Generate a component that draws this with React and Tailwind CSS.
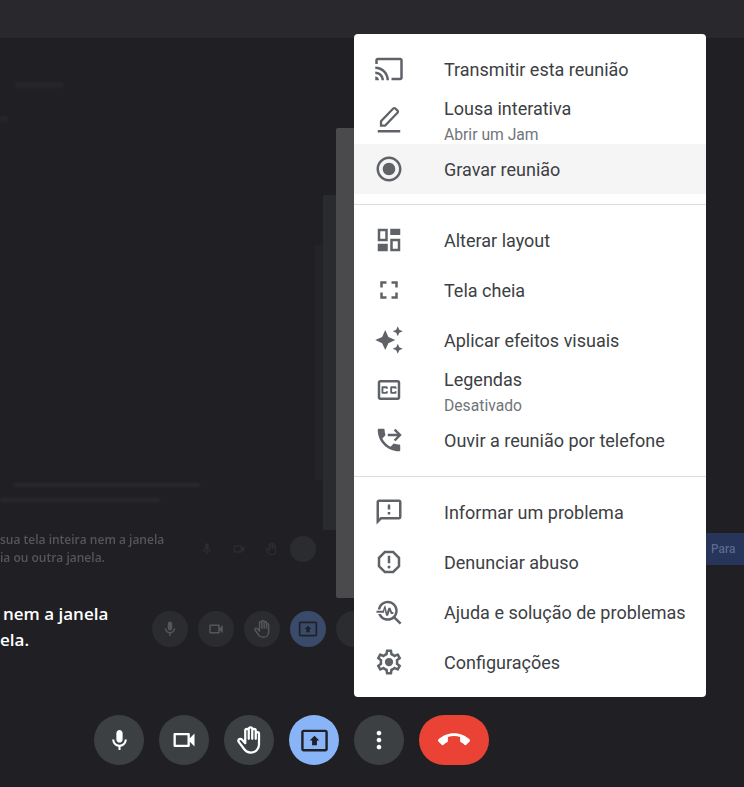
function Icon({ d, size = 30, className = "", evenodd = false }) {
  return (
    <svg viewBox="0 0 24 24" width={size} height={size} className={className} fill="currentColor" fillRule={evenodd ? "evenodd" : "nonzero"}>
      <path d={d} />
    </svg>
  );
}

const icons = {
  cast: "M21 3H3c-1.1 0-2 .9-2 2v3h2V5h18v14h-7v2h7c1.1 0 2-.9 2-2V5c0-1.1-.9-2-2-2zM1 18v3h3c0-1.66-1.34-3-3-3zm0-4v2c2.76 0 5 2.24 5 5h2c0-3.87-3.13-7-7-7zm0-4v2c4.97 0 9 4.03 9 9h2c0-6.08-4.93-11-11-11z",
  record: "M12 7c-2.76 0-5 2.24-5 5s2.24 5 5 5 5-2.24 5-5-2.24-5-5-5zm0-5C6.48 2 2 6.48 2 12s4.48 10 10 10 10-4.48 10-10S17.52 2 12 2zm0 18c-4.42 0-8-3.58-8-8s3.58-8 8-8 8 3.58 8 8-3.58 8-8 8z",
  layout: "M3 3h8v10H3zm2 2v6h4V5zM13 3h8v5h-8zM3 15h8v6H3zM13 11h8v10h-8zm2 2v6h4v-6z",
  fullscreen: "M7 14H5v5h5v-2H7v-3zm-2-4h2V7h3V5H5v5zm12 7h-3v2h5v-5h-2v3zM14 5v2h3v3h2V5h-5z",
  sparkles: "M19 9l1.25-2.75L23 5l-2.75-1.25L19 1l-1.25 2.75L15 5l2.75 1.25L19 9zm-7.5.5L9 4 6.5 9.5 1 12l5.5 2.5L9 20l2.5-5.5L17 12l-5.5-2.5zM19 15l-1.25 2.75L15 19l2.75 1.25L19 23l1.25-2.75L23 19l-2.75-1.25L19 15z",
  cc: "M19 4H5c-1.11 0-2 .9-2 2v12c0 1.1.89 2 2 2h14c1.1 0 2-.9 2-2V6c0-1.1-.9-2-2-2zm0 14H5V6h14v12zM7 15h3c.55 0 1-.45 1-1v-1H9.5v.5h-2v-3h2v.5H11v-1c0-.55-.45-1-1-1H7c-.55 0-1 .45-1 1v4c0 .55.45 1 1 1zm7 0h3c.55 0 1-.45 1-1v-1h-1.5v.5h-2v-3h2v.5H18v-1c0-.55-.45-1-1-1h-3c-.55 0-1 .45-1 1v4c0 .55.45 1 1 1z",
  phone: "M11 7h7.5L15.8 4.3 17.2 3l5 5-5 5-1.4-1.3L18.5 9H11zM20 15.5c-1.25 0-2.45-.2-3.57-.57-.35-.11-.74-.03-1.02.24l-2.2 2.2c-2.83-1.44-5.15-3.75-6.59-6.59l2.2-2.21c.28-.26.36-.65.25-1C8.7 6.45 8.5 5.25 8.5 4c0-.55-.45-1-1-1H4c-.55 0-1 .45-1 1 0 9.39 7.61 17 17 17 .55 0 1-.45 1-1v-3.5c0-.55-.45-1-1-1z",
  feedback: "M20 2H4c-1.1 0-1.99.9-1.99 2L2 22l4-4h14c1.1 0 2-.9 2-2V4c0-1.1-.9-2-2-2zm0 14H5.17L4 17.17V4h16v12zm-9-4h2v2h-2zm0-6h2v4h-2z",
  report: "M15.73 3H8.27L3 8.27v7.46L8.27 21h7.46L21 15.73V8.27L15.73 3zM19 14.9L14.9 19H9.1L5 14.9V9.1L9.1 5h5.8L19 9.1v5.8zM11 7h2v6h-2zM12 14.7a1.2 1.2 0 1 0 0 2.4 1.2 1.2 0 0 0 0-2.4z",
  troubleshoot: "M22 20.59l-4.69-4.69C18.37 14.55 19 12.85 19 11c0-4.42-3.58-8-8-8-4.08 0-7.44 3.05-7.93 7h2.02C5.57 7.17 8.03 5 11 5c3.31 0 6 2.69 6 6s-2.69 6-6 6c-2.42 0-4.5-1.44-5.45-3.5H3.398C4.48 16.69 7.48 19 11 19c1.85 0 3.55-.63 4.9-1.69L20.59 22 22 20.59zM8.43 9.69L9.65 15h1.64l1.26-3.78.9 2.28h2.05v-1.5h-1.02l-1.33-3.5h-1.57l-1.26 3.78-1.25-5.28H8.43l-1.38 4H2v1.5h6.1z",
  settings: "M19.43 12.98c.04-.32.07-.64.07-.98 0-.34-.03-.66-.07-.98l2.11-1.65c.19-.15.24-.42.12-.64l-2-3.46c-.09-.16-.26-.25-.44-.25-.06 0-.12.01-.17.03l-2.49 1c-.52-.4-1.08-.73-1.69-.98l-.38-2.65C14.46 2.18 14.25 2 14 2h-4c-.25 0-.46.18-.49.42l-.38 2.65c-.61.25-1.17.59-1.69.98l-2.49-1c-.06-.02-.12-.03-.18-.03-.17 0-.34.09-.43.25l-2 3.46c-.13.22-.07.49.12.64l2.11 1.65c-.04.32-.07.65-.07.98 0 .33.03.66.07.98l-2.11 1.65c-.19.15-.24.42-.12.64l2 3.46c.09.16.26.25.44.25.06 0 .12-.01.17-.03l2.49-1c.52.4 1.08.73 1.69.98l.38 2.65c.03.24.24.42.49.42h4c.25 0 .46-.18.49-.42l.38-2.65c.61-.25 1.17-.59 1.69-.98l2.49 1c.06.02.12.03.18.03.17 0 .34-.09.43-.25l2-3.46c.12-.22.07-.49-.12-.64l-2.11-1.65zm-1.98-1.71c.04.31.05.52.05.73 0 .21-.02.43-.05.73l-.14 1.13.89.7 1.08.84-.7 1.21-1.27-.51-1.04-.42-.9.68c-.43.32-.84.56-1.25.73l-1.06.43-.16 1.13-.2 1.35h-1.4l-.19-1.35-.16-1.13-1.06-.43c-.43-.18-.83-.41-1.23-.71l-.91-.7-1.06.43-1.27.51-.7-1.21 1.08-.84.89-.7-.14-1.13c-.03-.31-.05-.54-.05-.74s.02-.43.05-.73l.14-1.13-.89-.7-1.08-.84.7-1.21 1.27.51 1.04.42.9-.68c.43-.32.84-.56 1.25-.73l1.06-.43.16-1.13.2-1.35h1.39l.19 1.35.16 1.13 1.06.43c.43.18.83.41 1.23.71l.91.7 1.06-.43 1.27-.51.7 1.21-1.07.85-.89.7.14 1.13zM12 8.7a3.3 3.3 0 1 0 0 6.6 3.3 3.3 0 0 0 0-6.6z",
  mic: "M12 14c1.66 0 3-1.34 3-3V5c0-1.66-1.34-3-3-3S9 3.34 9 5v6c0 1.66 1.34 3 3 3zM17 11c0 2.76-2.24 5-5 5s-5-2.24-5-5H5c0 3.53 2.61 6.43 6 6.92V21h2v-3.08c3.39-.49 6-3.39 6-6.92h-2z",
  video: "M15 8v8H5V8h10m1-2H4c-.55 0-1 .45-1 1v10c0 .55.45 1 1 1h12c.55 0 1-.45 1-1v-3.5l4 4v-11l-4 4V7c0-.55-.45-1-1-1z",
  present: "M21 3.01H3c-1.1 0-2 .9-2 2V19c0 1.1.9 2 2 2h18c1.1 0 2-.9 2-2V5.01c0-1.1-.9-2-2-2zm0 16.02H3V4.99h18v14.04zM10 12H8l4-4 4 4h-2v4h-4v-4z",
  more: "M12 8c1.1 0 2-.9 2-2s-.9-2-2-2-2 .9-2 2 .9 2 2 2zm0 2c-1.1 0-2 .9-2 2s.9 2 2 2 2-.9 2-2-.9-2-2-2zm0 6c-1.1 0-2 .9-2 2s.9 2 2 2 2-.9 2-2-.9-2-2-2z",
  hangup: "M12 9c-1.6 0-3.15.25-4.6.72v3.1c0 .39-.23.74-.56.9-.98.49-1.87 1.12-2.66 1.85-.18.18-.43.28-.7.28-.28 0-.53-.11-.71-.29L.29 13.08c-.18-.17-.29-.42-.29-.7 0-.28.11-.53.29-.71C3.34 8.78 7.46 7 12 7s8.66 1.78 11.71 4.67c.18.18.29.43.29.71 0 .28-.11.53-.29.71l-2.48 2.48c-.18.18-.43.29-.71.29-.27 0-.52-.11-.7-.28-.79-.74-1.69-1.36-2.67-1.85-.33-.16-.56-.5-.56-.9v-3.1C15.15 9.25 13.6 9 12 9z",
};

function PencilIcon() {
  return (
    <svg viewBox="0 0 24 24" width="30" height="30" fill="none" stroke="currentColor" strokeWidth="1.8">
      <path d="M5.6 17.2v-3.4L15.4 3.6a1.2 1.2 0 0 1 1.7 0l1.7 1.7a1.2 1.2 0 0 1 0 1.7L8.9 17.2z" />
      <path d="M3 21.8h18" strokeWidth="2" />
    </svg>
  );
}

function HandIcon({ size = 30 }) {
  return (
    <svg viewBox="0 0 24 24" width={size} height={size} fill="none" stroke="currentColor" strokeWidth="1.8" strokeLinejoin="round" strokeLinecap="round">
      <path d="M9 12V4.5a1.4 1.4 0 0 1 2.8 0V11M11.8 11V3.2a1.4 1.4 0 0 1 2.8 0V11M14.6 11V4.5a1.4 1.4 0 0 1 2.8 0V11M17.4 11V7a1.3 1.3 0 0 1 2.6 0v8.5c0 3.8-2.8 6.5-6.5 6.5-2.6 0-4.2-1-5.6-3l-4.1-5.5c-.6-.8-.3-1.8.5-2.2.8-.4 1.6-.2 2.2.5L9 14.5V12" />
    </svg>
  );
}

function MenuRow({ icon, label, sub, active }) {
  return (
    <div className={`flex h-[50px] items-center gap-10 px-5 ${active ? "bg-[#f5f5f5]" : ""}`}>
      <div className="flex w-[30px] shrink-0 justify-center text-[#5f6368]">
        {icon === "pencil" ? <PencilIcon /> : <Icon d={icons[icon]} />}
      </div>
      <div className="flex flex-col pt-[2px]">
        <span className={`text-[18px] leading-[24px] text-[#3c4043] ${sub ? "-mt-[7px]" : ""}`}>{label}</span>
        {sub && <span className="mt-[4px] -mb-[8px] text-[15.7px] leading-[20px] text-[#70757a]">{sub}</span>}
      </div>
    </div>
  );
}

function ToolButton({ children, className = "bg-[#3c4043] text-white" }) {
  return <div className={`flex h-[50px] w-[50px] items-center justify-center rounded-full ${className}`}>{children}</div>;
}

function DimButton({ children, className = "bg-[#2b2c2f] text-[#55565a]" }) {
  return <div className={`flex h-[36px] w-[36px] shrink-0 items-center justify-center rounded-full ${className}`}>{children}</div>;
}

export default function App() {
  return (
    <div className="relative flex h-[787px] w-[744px] flex-col overflow-hidden bg-[#202024] font-['Roboto',sans-serif]">
      <div className="h-[38px] shrink-0 bg-[#29292d]" />

      {/* captured screen behind the menu */}
      <div className="flex h-[560px] shrink-0">
        <div className="flex w-[315px] shrink-0 flex-col">
          <div className="ml-[15px] mt-[44px] h-[6px] w-[48px] bg-[#25252a] blur-[1px]" />
          <div className="mt-[28px] h-[6px] w-[8px] bg-[#25252a] blur-[1px]" />
          <div className="ml-[14px] mt-[361px] h-[4px] w-[186px] bg-[#28292c] blur-[1px]" />
          <div className="mt-[11px] h-[4px] w-[160px] bg-[#28292c] blur-[1px]" />
          <div className="mt-[29px] flex items-center justify-between">
            <div className="font-['Open_Sans',sans-serif] text-[12px] font-semibold leading-[18px] text-[#55565a] blur-[0.5px]">
              <p className="whitespace-nowrap">sua tela inteira nem a janela</p>
              <p className="whitespace-nowrap">ia ou outra janela.</p>
            </div>
            <div className="-mr-[1px] flex items-center gap-[12px] text-[#2d2e31]">
              <div className="flex items-center gap-[18px]">
                <Icon d={icons.mic} size={14} />
                <Icon d={icons.video} size={14} />
                <HandIcon size={14} />
              </div>
              <div className="flex h-[26px] w-[26px] items-center justify-center rounded-full bg-[#2b2c2f]">
                <Icon d={icons.present} size={13} />
              </div>
            </div>
          </div>
        </div>
        <div className="mt-[207px] h-[235px] w-[8px] shrink-0 bg-[#232427]" />
        <div className="mt-[157px] h-[335px] w-[13px] shrink-0 rounded-tl-[2px] bg-[#2a2b2e]" />
        <div className="mt-[90px] h-[470px] w-[18px] shrink-0 rounded-l-[2px] bg-[#4a4a4d]" />
        <div className="w-[352px] shrink-0" />
        <div className="flex flex-1 flex-col">
          <div className="mt-[495px] flex h-[32px] items-center bg-[#27355a] pl-[5px] text-[12px] font-medium text-[#5a6a8e] blur-[0.4px]">Para</div>
        </div>
      </div>

      {/* second toolbar row, dimmed */}
      <div className="flex h-[117px] shrink-0 items-start">
        <div className="mt-[3px] w-[152px] shrink-0 whitespace-nowrap font-['Open_Sans',sans-serif] text-[17px] font-semibold leading-[26px] text-white">
          <p className="pl-[3px]">nem a janela</p>
          <p>ela.</p>
        </div>
        <div className="mt-[13px] flex items-center gap-[10px]">
          <DimButton><Icon d={icons.mic} size={18} /></DimButton>
          <DimButton><Icon d={icons.video} size={18} /></DimButton>
          <DimButton><HandIcon size={20} /></DimButton>
          <DimButton className="bg-[#3a4a6b] text-[#202124]"><Icon d={icons.present} size={20} /></DimButton>
          <DimButton />
        </div>
      </div>

      {/* call controls */}
      <div className="flex items-center gap-[15px] pl-[94px]">
        <ToolButton><Icon d={icons.mic} size={25} /></ToolButton>
        <ToolButton><Icon d={icons.video} size={28} /></ToolButton>
        <ToolButton><HandIcon size={30} /></ToolButton>
        <ToolButton className="bg-[#8ab4f8] text-[#202124]"><Icon d={icons.present} size={29} /></ToolButton>
        <ToolButton><Icon d={icons.more} size={28} /></ToolButton>
        <div className="flex h-[50px] w-[70px] items-center justify-center rounded-full bg-[#ea4335] text-white">
          <Icon d={icons.hangup} size={32} />
        </div>
      </div>

      {/* menu */}
      <div className="absolute left-[354px] top-[34px] w-[352px] rounded-[4px] bg-white py-[10px]">
        <MenuRow icon="cast" label="Transmitir esta reunião" />
        <MenuRow icon="pencil" label="Lousa interativa" sub="Abrir um Jam" />
        <MenuRow icon="record" label="Gravar reunião" active />
        <div className="my-[10px] h-px bg-[#dadce0]" />
        <MenuRow icon="layout" label="Alterar layout" />
        <MenuRow icon="fullscreen" label="Tela cheia" />
        <MenuRow icon="sparkles" label="Aplicar efeitos visuais" />
        <MenuRow icon="cc" label="Legendas" sub="Desativado" />
        <MenuRow icon="phone" label="Ouvir a reunião por telefone" />
        <div className="mb-[10px] mt-[11px] h-px bg-[#dadce0]" />
        <MenuRow icon="feedback" label="Informar um problema" />
        <MenuRow icon="report" label="Denunciar abuso" />
        <MenuRow icon="troubleshoot" label="Ajuda e solução de problemas" />
        <MenuRow icon="settings" label="Configurações" />
      </div>
    </div>
  );
}
